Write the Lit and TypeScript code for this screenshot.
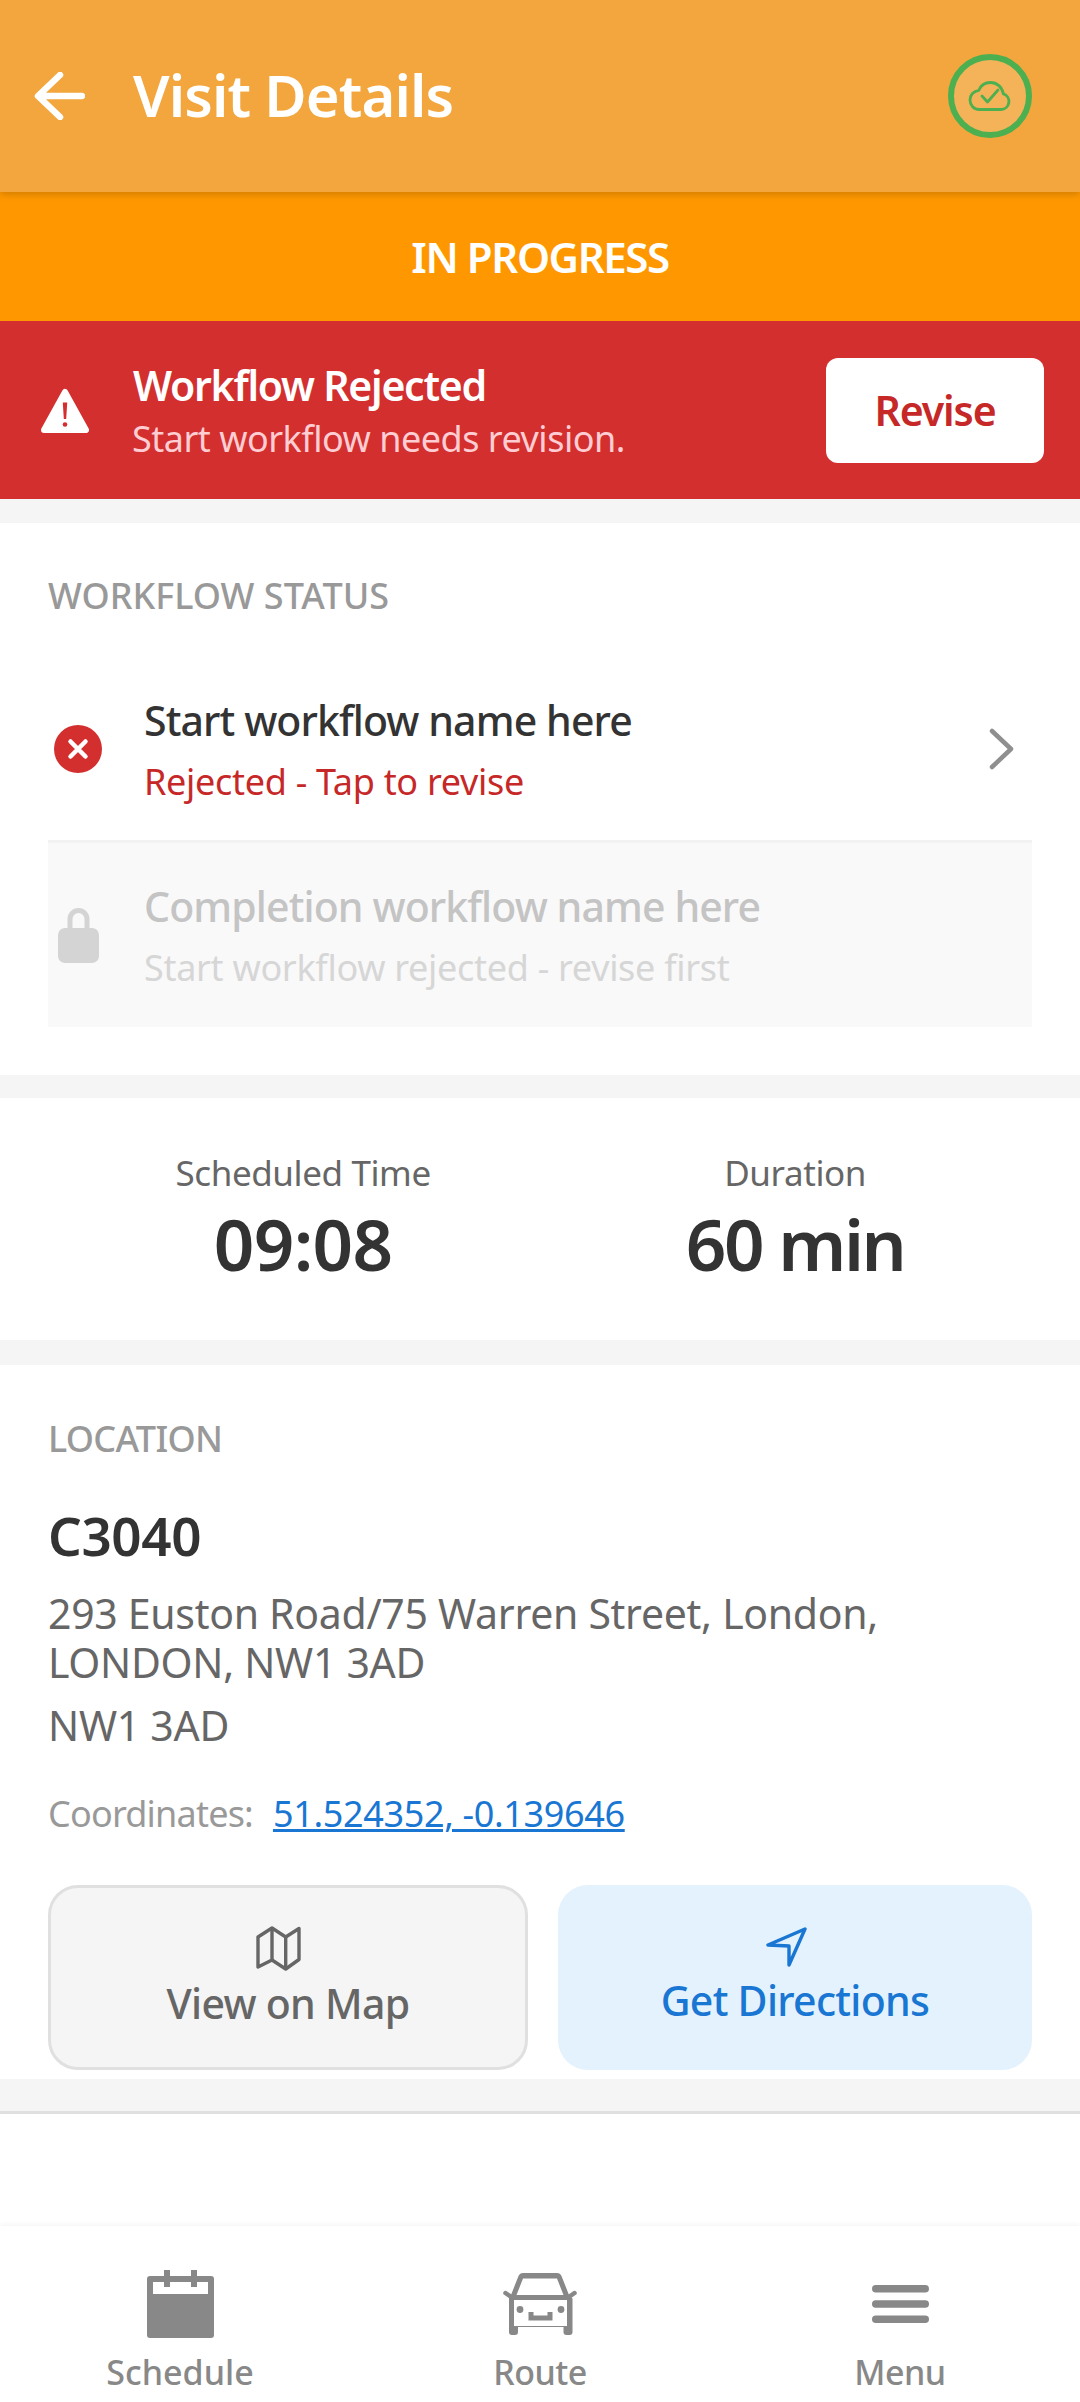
import { LitElement, html, css } from "lit";
import { customElement } from "lit/decorators.js";

@customElement("app-root")
export class AppRoot extends LitElement {
  static styles = css`
    :host { display: block; width: 1080px; height: 2402px; background: #fff; overflow: hidden; font-family: "Noto Sans", sans-serif; }
    .page { display: flex; flex-direction: column; height: 2402px; background: #f5f5f5; }
    .header { height: 192px; flex: none; background: #f2a63d; display: flex; align-items: center; padding: 0 48px 0 34px; box-sizing: border-box; box-shadow: 0 2px 8px rgba(0,0,0,.2); position: relative; z-index: 1; }
    .back { width: 51px; height: 48px; margin-right: 48px; flex: none; }
    .title { font-size: 58px; font-weight: 600; color: #fff; flex: 1; letter-spacing: -.9px; line-height: 80px; margin-top: -3px; }
    .sync { width: 84px; height: 84px; box-sizing: border-box; border: 6.5px solid #4caf50; border-radius: 50%; background: rgba(255,255,255,.15); display: flex; align-items: center; justify-content: center; }
    .sync svg { width: 44px; height: 44px; }
    .status { height: 129px; flex: none; background: #ff9800; color: #fff; display: flex; align-items: center; justify-content: center; font-size: 42px; font-weight: 600; letter-spacing: -1.4px; }
    .banner { height: 178px; flex: none; background: #d32f2f; display: flex; align-items: center; padding: 0 36px 0 41px; box-sizing: border-box; margin-bottom: 24px; }
    .warn { width: 48px; height: 45px; margin-right: 44px; flex: none; }
    .banner-text { flex: 1; }
    .banner-title { font-size: 41px; font-weight: 600; color: #fff; line-height: 56px; letter-spacing: -1.25px; }
    .banner-sub { font-size: 36px; color: #ffcdd2; line-height: 48px; letter-spacing: -.5px; margin-left: -1px; margin-top: 2px; }
    .revise { width: 218px; height: 105px; background: #fff; border-radius: 12px; color: #c62828; font-size: 41px; font-weight: 600; display: flex; align-items: center; justify-content: center; letter-spacing: -1.1px; }
    .card { background: #fff; flex: none; box-sizing: border-box; }
    .wf { height: 552px; padding: 49px 48px 0; margin-bottom: 23px; }
    .label { font-size: 36px; font-weight: 500; color: #999; line-height: 48px; letter-spacing: -.7px; }
    .label.wide { letter-spacing: 0; }
    .row { display: flex; align-items: center; height: 184px; box-sizing: border-box; }
    .row.first { margin-top: 24px; height: 199px; padding-top: 14px; border-bottom: 3px solid #f2f2f2; }
    .row.locked { background: #f9f9f9; }
    .row-ic { width: 60px; margin-right: 36px; flex: none; display: flex; justify-content: center; }
    .row-body { flex: 1; }
    .row-title { font-size: 41px; font-weight: 500; color: #333; line-height: 56px; letter-spacing: -.88px; }
    .row-sub { font-size: 36px; color: #c62828; line-height: 48px; margin-top: 10px; letter-spacing: -.3px; }
    .locked .row-title { color: #c4c4c4; }
    .locked .row-sub { color: #d6d6d6; }
    .chev { width: 26px; height: 42px; margin-right: 18px; flex: none; }
    .times { height: 242px; margin-bottom: 25px; padding: 50px 48px 0; display: flex; justify-content: space-around; }
    .time { text-align: center; }
    .time-l { font-size: 35px; color: #666; line-height: 50px; letter-spacing: -.4px; }
    .time-v { font-size: 71px; font-weight: 600; color: #333; line-height: 90px; letter-spacing: -.7px; margin-top: 1px; }
    .time-v.tight { letter-spacing: -2.4px; }
    .loc { height: 714px; padding: 50px 48px 0; margin-bottom: 32px; }
    .code { font-size: 53px; font-weight: 600; color: #333; line-height: 66px; margin-top: 40px; letter-spacing: -.4px; }
    .addr { font-size: 41px; color: #666; line-height: 49px; margin-top: 20px; letter-spacing: -.3px; }
    .pc { font-size: 41px; color: #666; line-height: 49px; margin-top: 14px; letter-spacing: -.27px; }
    .coord { font-size: 36px; color: #999; line-height: 48px; margin-top: 40px; display: flex; letter-spacing: -.8px; }
    .coord a { color: #1976d2; text-decoration: underline; text-decoration-thickness: 3px; margin-left: 20px; letter-spacing: -.35px; }
    .btns { display: flex; gap: 30px; margin-top: 47px; }
    .btn { height: 185px; flex: none; border-radius: 30px; box-sizing: border-box; display: flex; flex-direction: column; align-items: center; justify-content: center; font-size: 41px; font-weight: 500; letter-spacing: -.7px; }
    .btn svg { margin-bottom: 4px; margin-right: 18px; }
    .btn.map { width: 480px; background: #f5f5f5; border: 3px solid #e0e0e0; color: #666; }
    .btn.dir { width: 474px; background: #e3f2fd; color: #1976d2; padding-bottom: 2px; }
    .btn.dir svg { margin-bottom: 6px; }
    .btn span { line-height: 54px; }
    .spacer { flex: 1; background: #fff; border-top: 3px solid #e0e0e0; }
    .nav { height: 176px; flex: none; background: #fff; display: grid; grid-template-columns: repeat(3, 360px); box-shadow: 0 -2px 4px rgba(0,0,0,.04); position: relative; }
    .tab { display: flex; flex-direction: column; align-items: center; color: #888; font-size: 34px; font-weight: 500; letter-spacing: -.5px; }
    .tab.sched { letter-spacing: 0; }
    .tab-ic { height: 72px; margin-top: 42px; display: flex; align-items: center; justify-content: center; }
    .tab span { line-height: 46px; margin-top: 9px; }
  `;

  render() {
    return html`<div class="page">
      <div class="header">
        <svg class="back" viewBox="0 0 51 48" fill="none" stroke="#fff" stroke-width="6.5" stroke-linecap="round" stroke-linejoin="round"><path d="M48 24H5M26 3 4 24l22 21"/></svg>
        <div class="title">Visit Details</div>
        <div class="sync"><svg viewBox="0 0 44 32" fill="none" stroke="#4caf50" stroke-width="2.8" stroke-linecap="round" stroke-linejoin="round"><path d="M11 29.5h22a8 8 0 0 0 2.4-15.6C34 7 29 2.5 22.5 2.5c-5.5 0-9.8 3-11.6 7.8C5.6 11 2 15 2 20c0 5.4 4 9.5 9 9.5Z"/><path d="m14 16 5.5 6L30 10"/></svg></div>
      </div>
      <div class="status">IN PROGRESS</div>
      <div class="banner">
        <svg class="warn" viewBox="0 0 48 45"><path fill="#fff" stroke="#fff" stroke-width="6" stroke-linejoin="round" d="M24 4 45 42H3Z"/><path fill="#d32f2f" d="M21.8 14.5h4.4L25.2 31h-2.4Z"/><circle cx="24" cy="36.5" r="2.3" fill="#d32f2f"/></svg>
        <div class="banner-text">
          <div class="banner-title">Workflow Rejected</div>
          <div class="banner-sub">Start workflow needs revision.</div>
        </div>
        <div class="revise">Revise</div>
      </div>
      <div class="card wf">
        <div class="label wide">WORKFLOW STATUS</div>
        <div class="row first">
          <div class="row-ic"><svg width="48" height="48" viewBox="0 0 48 48"><circle cx="24" cy="24" r="24" fill="#d32f2f"/><path d="m16.5 16.5 15 15M31.5 16.5l-15 15" stroke="#fff" stroke-width="4.5" stroke-linecap="round"/></svg></div>
          <div class="row-body">
            <div class="row-title">Start workflow name here</div>
            <div class="row-sub">Rejected - Tap to revise</div>
          </div>
          <svg class="chev" viewBox="0 0 26 42" fill="none" stroke="#8f8f8f" stroke-width="4.5" stroke-linecap="round" stroke-linejoin="round"><path d="m4 3 19 18L4 39"/></svg>
        </div>
        <div class="row locked">
          <div class="row-ic"><svg width="41" height="55" viewBox="0 0 41 55"><path fill="none" stroke="#d4d4d4" stroke-width="5" d="M12 24V11a8.5 8.5 0 0 1 17 0v13"/><rect y="20" width="41" height="35" rx="7" fill="#d4d4d4"/></svg></div>
          <div class="row-body">
            <div class="row-title">Completion workflow name here</div>
            <div class="row-sub">Start workflow rejected - revise first</div>
          </div>
        </div>
      </div>
      <div class="card times">
        <div class="time"><div class="time-l">Scheduled Time</div><div class="time-v">09:08</div></div>
        <div class="time"><div class="time-l">Duration</div><div class="time-v tight">60 min</div></div>
      </div>
      <div class="card loc">
        <div class="label">LOCATION</div>
        <div class="code">C3040</div>
        <div class="addr">293 Euston Road/75 Warren Street, London,<br />LONDON, NW1 3AD</div>
        <div class="pc">NW1 3AD</div>
        <div class="coord">Coordinates: <a>51.524352, -0.139646</a></div>
        <div class="btns">
          <div class="btn map">
            <svg width="46" height="46" viewBox="-2 -2 46 46" fill="none" stroke="#666" stroke-width="3.4" stroke-linejoin="round"><path d="M0 9 14 0l13.7 9L41 .5v31L27.7 41 14 32 0 39Z"/><path d="M14 0v32M27.7 9v32"/></svg>
            <span>View on Map</span>
          </div>
          <div class="btn dir">
            <svg width="41" height="40" viewBox="0 0 41 40" fill="none" stroke="#1976d2" stroke-width="3.4" stroke-linejoin="round" stroke-linecap="round"><path d="M39 2 2 18l21 1v19Z"/></svg>
            <span>Get Directions</span>
          </div>
        </div>
      </div>
      <div class="spacer"></div>
      <div class="nav">
        <div class="tab sched">
          <div class="tab-ic"><svg width="67" height="68" viewBox="0 0 67 68"><rect y="6" width="67" height="62" rx="3" fill="#888"/><rect x="6" y="12" width="55" height="12" fill="#fff"/><rect x="17" width="6" height="17" fill="#888"/><rect x="44" width="6" height="17" fill="#888"/></svg></div>
          <span>Schedule</span>
        </div>
        <div class="tab">
          <div class="tab-ic"><svg width="74" height="62" viewBox="0 0 74 62"><path fill="#888" fill-rule="evenodd" d="M20 0h34a5 5 0 0 1 4.500 3L66 22l3.500 3.500V59a3 3 0 0 1-3 3h-3a3 3 0 0 1-3-3v-5H15v5a3 3 0 0 1-3 3H9a3 3 0 0 1-3-3V25.500L8 22l7.500-19A5 5 0 0 1 20 0Zm0 5.500L13.500 22h47L54 5.500ZM11 27v26h53V27Z"/><path stroke="#888" stroke-width="4.5" stroke-linecap="round" d="m2.500 20 5 3.500M71.500 20l-5 3.500"/><circle cx="17" cy="36.500" r="3.400" fill="#888"/><circle cx="58" cy="36.500" r="3.400" fill="#888"/><path fill="none" stroke="#888" stroke-width="5" d="M28 39v6h19v-6"/></svg></div>
          <span>Route</span>
        </div>
        <div class="tab">
          <div class="tab-ic"><svg width="57" height="38" viewBox="0 0 57 38"><g fill="#888"><rect width="57" height="7.500" rx="3.750"/><rect y="15.250" width="57" height="7.500" rx="3.750"/><rect y="30.500" width="57" height="7.500" rx="3.750"/></g></svg></div>
          <span>Menu</span>
        </div>
      </div>
    </div>`;
  }
}
